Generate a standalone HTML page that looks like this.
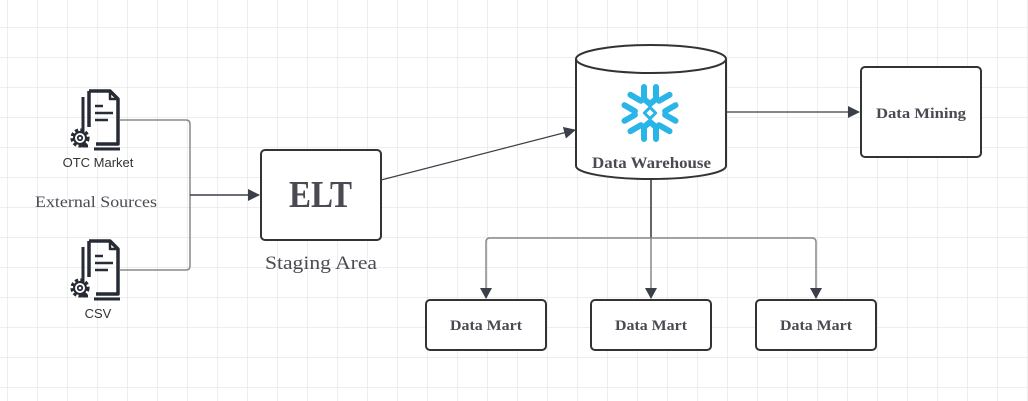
<!DOCTYPE html>
<html><head><meta charset="utf-8"><style>
html,body{margin:0;padding:0;background:#fff;}
svg{display:block;}
.s{font-family:"Liberation Serif",serif;fill:#4a4a52;}
</style></head><body>
<svg width="1028" height="401" viewBox="0 0 1028 401" xmlns="http://www.w3.org/2000/svg">
<defs>
<pattern id="g" x="7" y="27" width="30" height="30" patternUnits="userSpaceOnUse">
<path d="M0 0H30M0 0V30" stroke="#dedede" stroke-width="1" fill="none"/>
</pattern>
<marker id="a" markerWidth="12" markerHeight="12" refX="11" refY="6" orient="auto" markerUnits="userSpaceOnUse">
<path d="M0 0L12 6L0 12Z" fill="#3a3f48"/>
</marker>
<g id="doc" stroke="#262b35" fill="none" stroke-linejoin="round">
<path d="M83 97V146H88M94 149H120" stroke-width="3"/>
<path d="M89 91H110L118 99V144H96" stroke-width="3.5"/>
<path d="M89 91V127" stroke-width="3.5"/>
<path d="M110 91V99H118" stroke-width="2.5"/>
<path d="M95 106H103M95 113H113M95 120H108" stroke-width="2.5"/>
<circle cx="80" cy="138" r="8" stroke-width="3.2" stroke-dasharray="3.2 2.2"/>
<circle cx="80" cy="138" r="6" stroke-width="2" fill="#fff"/>
<circle cx="80" cy="138" r="2.2" stroke-width="1.8"/>
</g>
</defs>
<rect width="1028" height="401" fill="url(#g)"/>
<use href="#doc"/>
<use href="#doc" y="150"/>
<text x="98" y="167" font-family="Liberation Sans,sans-serif" font-size="13" fill="#333" text-anchor="middle">OTC Market</text>
<text x="98" y="318" font-family="Liberation Sans,sans-serif" font-size="13" fill="#333" text-anchor="middle">CSV</text>
<text x="35" y="207" class="s" font-size="16" textLength="122" lengthAdjust="spacingAndGlyphs">External Sources</text>
<path d="M120 120H186Q190 120 190 124V266Q190 270 186 270H120" stroke="#888" stroke-width="1.5" fill="none"/>
<path d="M190 195H259" stroke="#3a3f48" stroke-width="1.5" marker-end="url(#a)"/>
<rect x="261" y="150" width="120" height="90" rx="4" fill="#fff" stroke="#333" stroke-width="2"/>
<text x="289" y="207" class="s" font-size="38" font-weight="bold" fill="#3c3f47" textLength="63" lengthAdjust="spacingAndGlyphs">ELT</text>
<text x="265" y="269" class="s" font-size="19" textLength="112" lengthAdjust="spacingAndGlyphs">Staging Area</text>
<path d="M381 180L575 130" stroke="#3a3f48" stroke-width="1.2" marker-end="url(#a)"/>
<path d="M576 59V166A75 13 0 0 0 726 166V59" fill="#fff" stroke="#333" stroke-width="2"/>
<ellipse cx="651" cy="59" rx="75" ry="14" fill="#fff" stroke="#333" stroke-width="2"/>
<g transform="translate(650,113)" stroke="#29b5e8" stroke-width="6" stroke-linecap="round" stroke-linejoin="round" fill="none">
<g><path d="M-6 -26V-14L0 -9"/><path d="M6 -26V-14L0 -9"/></g>
<g transform="rotate(60)"><path d="M-6 -26V-14"/><path d="M6 -26V-14"/></g>
<g transform="rotate(120)"><path d="M-6 -26V-14"/><path d="M6 -26V-14"/></g>
<g transform="rotate(180)"><path d="M-6 -26V-14L0 -9"/><path d="M6 -26V-14L0 -9"/></g>
<g transform="rotate(240)"><path d="M-6 -26V-14"/><path d="M6 -26V-14"/></g>
<g transform="rotate(300)"><path d="M-6 -26V-14"/><path d="M6 -26V-14"/></g>
<rect x="-4" y="-4" width="8" height="8" transform="rotate(45)" stroke-width="3"/>
</g>
<text x="592" y="168" class="s" font-size="16" font-weight="bold" textLength="119" lengthAdjust="spacingAndGlyphs">Data Warehouse</text>
<path d="M726 112H859" stroke="#3a3f48" stroke-width="1.2" marker-end="url(#a)"/>
<rect x="861" y="67" width="120" height="90" rx="4" fill="#fff" stroke="#333" stroke-width="2"/>
<text x="876" y="118" class="s" font-size="15" font-weight="bold" textLength="90" lengthAdjust="spacingAndGlyphs">Data Mining</text>
<path d="M651 180V238" stroke="#333" stroke-width="1.5"/>
<path d="M486 298V242Q486 238 490 238H812Q816 238 816 242V298" stroke="#888" stroke-width="1.5" fill="none"/>
<path d="M651 238V298" stroke="#888" stroke-width="1.5"/>
<path d="M480 288H492L486 299Z M645 288H657L651 299Z M810 288H822L816 299Z" fill="#3a3f48"/>
<rect x="426" y="300" width="120" height="50" rx="4" fill="#fff" stroke="#333" stroke-width="2"/>
<rect x="591" y="300" width="120" height="50" rx="4" fill="#fff" stroke="#333" stroke-width="2"/>
<rect x="756" y="300" width="120" height="50" rx="4" fill="#fff" stroke="#333" stroke-width="2"/>
<text x="450" y="330" class="s" font-size="15" font-weight="bold" textLength="72" lengthAdjust="spacingAndGlyphs">Data Mart</text>
<text x="615" y="330" class="s" font-size="15" font-weight="bold" textLength="72" lengthAdjust="spacingAndGlyphs">Data Mart</text>
<text x="780" y="330" class="s" font-size="15" font-weight="bold" textLength="72" lengthAdjust="spacingAndGlyphs">Data Mart</text>
</svg>
</body></html>
